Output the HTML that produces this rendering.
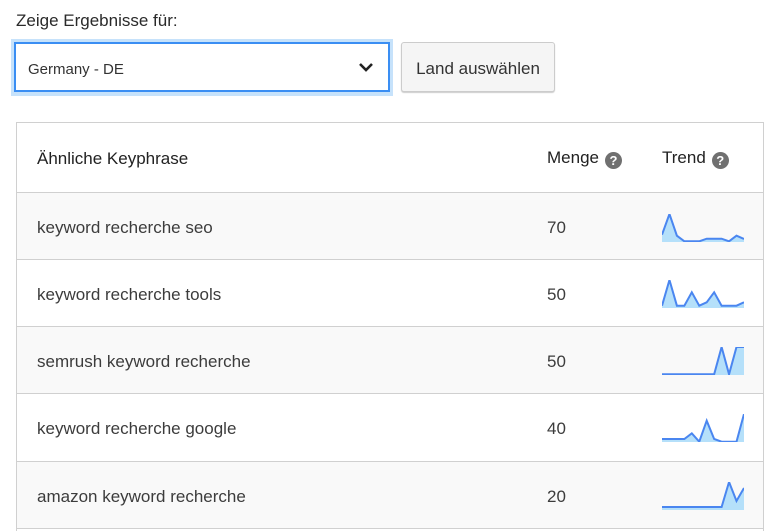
<!DOCTYPE html>
<html><head><meta charset="utf-8"><style>
html,body{margin:0;width:771px;height:531px;overflow:hidden}
body{background:#fff;font-family:"Liberation Sans",sans-serif;color:#2e2e2e;position:relative}
.a{position:absolute}
.q{display:inline-block;width:17px;height:17px;border-radius:50%;background:#707070;color:#fff;font-size:13px;font-weight:bold;text-align:center;line-height:17px;vertical-align:-2px;margin-left:6px}
.row{position:absolute;left:17px;width:746px;height:66px;border-top:1px solid #d0d0d0;font-size:17px;color:#3c3c3c}
.row span{position:absolute;top:25px}
.row svg{position:absolute;left:645px}
</style></head><body>
<div class="a" style="left:16px;top:11px;font-size:17px;color:#2a2a2a">Zeige Ergebnisse für:</div>
<div class="a" style="left:11px;top:39px;width:382px;height:57px;background:#c6e2fb"></div>
<div class="a" style="left:14px;top:42px;width:372px;height:46px;border:2px solid #3a8ef3;background:#fff"></div>
<div class="a" style="left:28px;top:61px;font-size:15px;color:#333">Germany - DE</div>
<svg class="a" style="left:358px;top:61px" width="16" height="12"><path d="M2 3 L8 9 L14 3" stroke="#222" stroke-width="2.6" fill="none"/></svg>
<div class="a" style="left:401px;top:42px;width:152px;height:48px;border:1px solid #ccc;border-radius:3px;background:#f5f5f5;box-shadow:0 1px 1px #ccc;font-size:17px;line-height:52px;text-align:center;color:#333">Land auswählen</div>
<div class="a" style="left:16px;top:122px;width:746px;height:409px;border:1px solid #d0d0d0;border-bottom:none;box-sizing:content-box"></div>
<div class="a" style="left:37px;top:149px;font-size:17px;color:#222">Ähnliche Keyphrase</div>
<div class="a" style="left:547px;top:148px;font-size:17px;color:#222">Menge<span class="q">?</span></div>
<div class="a" style="left:662px;top:148px;font-size:17px;color:#222">Trend<span class="q">?</span></div>
<div class="row" style="top:192px;background:#f9f9f9"><span style="left:20px">keyword recherche seo</span><span style="left:530px">70</span>
<svg style="top:21px" width="82" height="28"><path d="M0,20.7 L7.45,0 L14.9,21.7 L22.35,27.3 L29.8,27.3 L37.25,27.3 L44.7,24.7 L52.15,24.7 L59.6,24.7 L67.05,27.3 L74.5,21.7 L82,25 L82,28 L0,28Z" fill="#b5e0fa"/><path d="M0,20.7 L7.45,0 L14.9,21.7 L22.35,27.3 L29.8,27.3 L37.25,27.3 L44.7,24.7 L52.15,24.7 L59.6,24.7 L67.05,27.3 L74.5,21.7 L82,25" fill="none" stroke="#4a86f0" stroke-width="2"/></svg></div>
<div class="row" style="top:259px;background:#fff"><span style="left:20px">keyword recherche tools</span><span style="left:530px">50</span>
<svg style="top:20px" width="82" height="28"><path d="M0,25.7 L7.45,0 L14.9,25.7 L22.35,25.7 L29.8,12.3 L37.25,25.7 L44.7,22.3 L52.15,12.3 L59.6,25.7 L67.05,25.7 L74.5,25.7 L82,22.3 L82,28 L0,28Z" fill="#b5e0fa"/><path d="M0,25.7 L7.45,0 L14.9,25.7 L22.35,25.7 L29.8,12.3 L37.25,25.7 L44.7,22.3 L52.15,12.3 L59.6,25.7 L67.05,25.7 L74.5,25.7 L82,22.3" fill="none" stroke="#4a86f0" stroke-width="2"/></svg></div>
<div class="row" style="top:326px;background:#f9f9f9"><span style="left:20px">semrush keyword recherche</span><span style="left:530px">50</span>
<svg style="top:20px" width="82" height="28"><path d="M0,27.3 L52.15,27.3 L59.6,0 L67.05,27.3 L74.5,0 L82,0 L82,28 L0,28Z" fill="#b5e0fa"/><path d="M0,27.3 L52.15,27.3 L59.6,0 L67.05,27.3 L74.5,0 L82,0" fill="none" stroke="#4a86f0" stroke-width="2"/></svg></div>
<div class="row" style="top:393px;background:#fff"><span style="left:20px">keyword recherche google</span><span style="left:530px">40</span>
<svg style="top:20px" width="82" height="28"><path d="M0,25 L22.35,25 L29.8,19.3 L37.25,27.7 L44.7,6.7 L52.15,25 L59.6,27.7 L67.05,27.7 L74.5,27.7 L82,0 L82,28 L0,28Z" fill="#b5e0fa"/><path d="M0,25 L22.35,25 L29.8,19.3 L37.25,27.7 L44.7,6.7 L52.15,25 L59.6,27.7 L67.05,27.7 L74.5,27.7 L82,0" fill="none" stroke="#4a86f0" stroke-width="2"/></svg></div>
<div class="row" style="top:461px;background:#f9f9f9;height:66px"><span style="left:20px">amazon keyword recherche</span><span style="left:530px">20</span>
<svg style="top:20px" width="82" height="28"><path d="M0,25 L59.6,25 L67.05,0 L74.5,19 L82,6 L82,28 L0,28Z" fill="#b5e0fa"/><path d="M0,25 L59.6,25 L67.05,0 L74.5,19 L82,6" fill="none" stroke="#4a86f0" stroke-width="2"/></svg></div>
<div class="a" style="left:17px;top:528px;width:746px;height:1px;background:#d0d0d0"></div>
</body></html>
